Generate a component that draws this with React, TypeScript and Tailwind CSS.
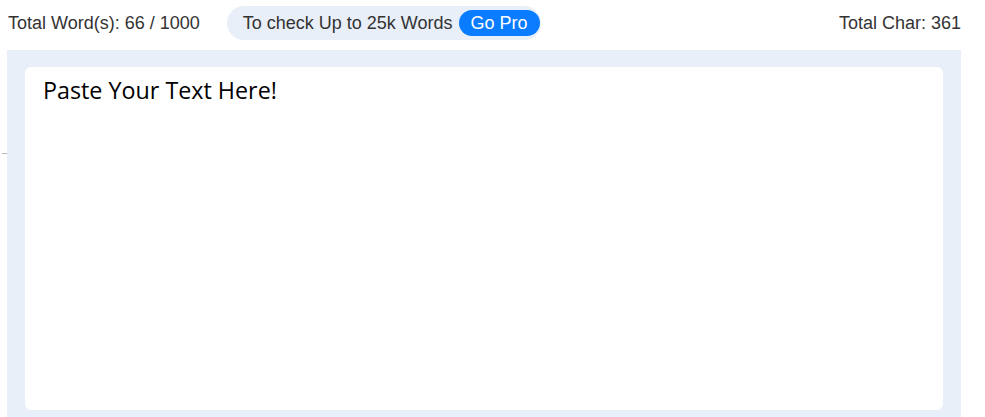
import React from "react";

export default function App() {
  return (
    <div className="relative w-[985px] h-[417px] overflow-hidden bg-white font-['Liberation_Sans',Arial,sans-serif] text-[#333]">
      {/* Top stats bar */}
      <div className="flex items-center justify-between h-[44px] pl-[8px] pr-[24px] pt-[1px]">
        <div className="flex items-center">
          <span className="text-[18px] leading-none">Total Word(s): 66 / 1000</span>
          <div className="ml-[27px] flex items-center h-[34px] rounded-full bg-[#e9eff8] pl-[16px] pr-[1px]">
            <span className="text-[18px] leading-none">To check Up to 25k Words</span>
            <button className="ml-[6px] h-[26px] px-[12px] rounded-full bg-[#0a7cff] text-white text-[18px] leading-none">
              Go Pro
            </button>
          </div>
        </div>
        <span className="text-[18px] leading-none">Total Char: 361</span>
      </div>

      {/* left tick */}
      <div className="absolute left-[2px] top-[153px] w-[5px] h-px bg-[#b5b5b5]" />

      {/* Editor panel */}
      <div className="ml-[7px] mr-[24px] mt-[6px] h-[367px] bg-[#e9eff8] px-[18px] pt-[17px] pb-[7px]">
        <div className="h-full rounded-md bg-white px-[18px] pt-[7px]">
          <p className="font-['Open_Sans',sans-serif] text-[23.3px] leading-[32px] text-black">
            Paste Your Text Here!
          </p>
        </div>
      </div>
    </div>
  );
}
